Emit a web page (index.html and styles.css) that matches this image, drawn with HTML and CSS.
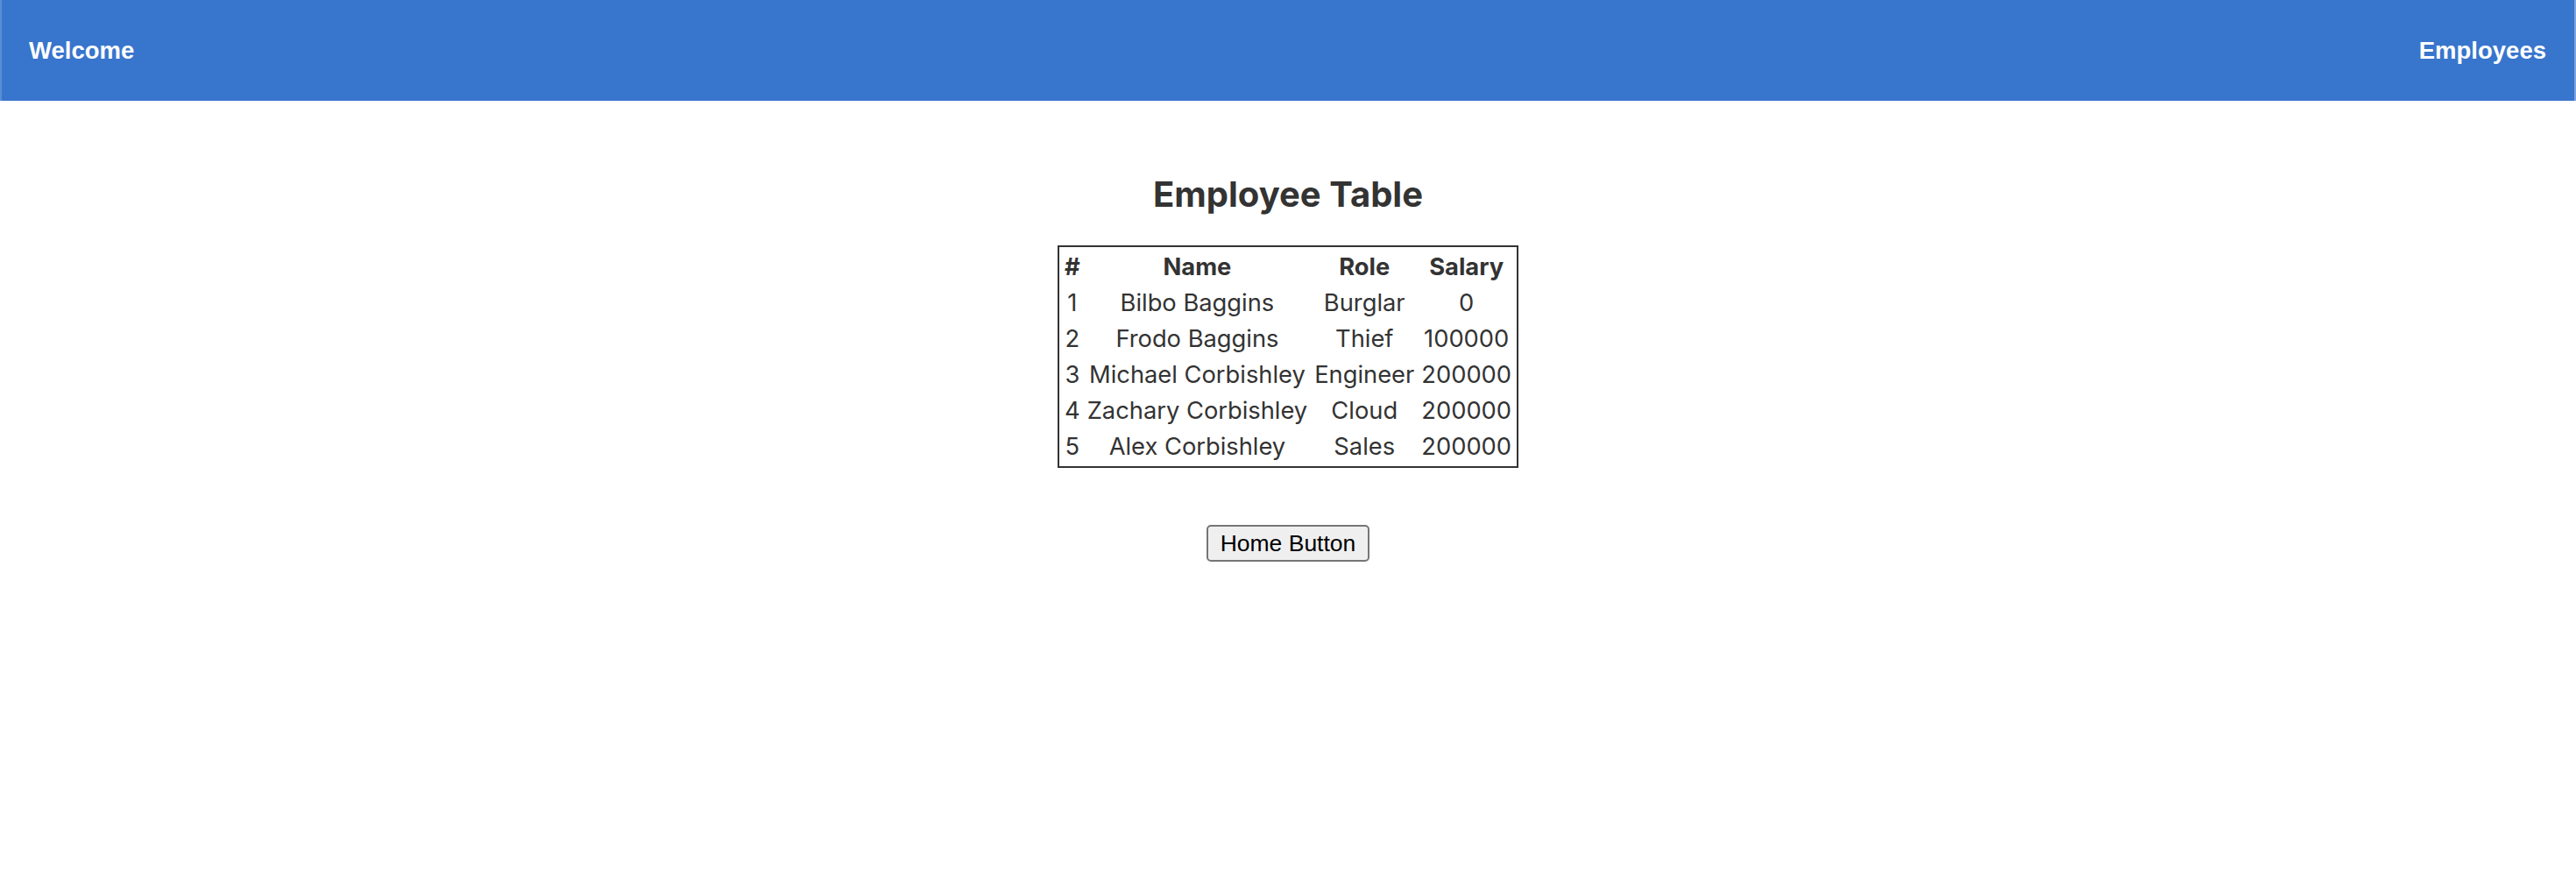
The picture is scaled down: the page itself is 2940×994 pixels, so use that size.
FILE: index.html
```html
<!DOCTYPE html>
<html>
<head>
<meta charset="utf-8">
<title>Employees</title>
<link rel="stylesheet" href="styles.css">
</head>
<body>
<header class="topbar">
  <span class="brand">Welcome</span>
  <span class="nav-link">Employees</span>
</header>
<main class="content">
  <h2 class="title">Employee Table</h2>
  <table class="emp-table">
    <thead>
      <tr><th>#</th><th>Name</th><th>Role</th><th>Salary</th></tr>
    </thead>
    <tbody>
      <tr><td>1</td><td>Bilbo Baggins</td><td>Burglar</td><td>0</td></tr>
      <tr><td>2</td><td>Frodo Baggins</td><td>Thief</td><td>100000</td></tr>
      <tr><td>3</td><td>Michael Corbishley</td><td>Engineer</td><td>200000</td></tr>
      <tr><td>4</td><td>Zachary Corbishley</td><td>Cloud</td><td>200000</td></tr>
      <tr><td>5</td><td>Alex Corbishley</td><td>Sales</td><td>200000</td></tr>
    </tbody>
  </table>
  <div class="actions">
    <button class="home-btn" type="button">Home Button</button>
  </div>
</main>
</body>
</html>
```
FILE: styles.css
```css
html, body {
  margin: 0;
  padding: 0;
  background: #ffffff;
}

body {
  font-family: Inter, "Noto Sans", sans-serif;
  color: #333333;
}

.topbar {
  height: 115px;
  box-sizing: border-box;
  display: flex;
  align-items: center;
  justify-content: space-between;
  padding: 0 32px 0 31px;
  background: #3875cd;
  border-left: 2px solid #5b8dd6;
  border-right: 2px solid #7da3dd;
  font-family: "Liberation Sans", Arial, sans-serif;
  font-weight: bold;
  font-size: 27.5px;
  color: #ffffff;
}

.content {
  display: flex;
  flex-direction: column;
  align-items: center;
}

.title {
  margin: 83px 0 34px 0;
  font-size: 40px;
  line-height: 48px;
  font-weight: 700;
  color: #333333;
}

.emp-table {
  border: 2px solid #333333;
  border-spacing: 4px;
  font-size: 27.3px;
  line-height: 33px;
  color: #333333;
}

.emp-table th,
.emp-table td {
  padding: 2px;
  text-align: center;
  white-space: nowrap;
}

.emp-table th {
  font-weight: 700;
}

.actions {
  margin-top: 65px;
}

.home-btn {
  font-family: "Liberation Sans", Arial, sans-serif;
  font-size: 26.5px;
  line-height: 30px;
  padding: 4px 14px;
  color: #000000;
  background: #efefef;
  border: 2px solid #767676;
  border-radius: 5px;
}
```
